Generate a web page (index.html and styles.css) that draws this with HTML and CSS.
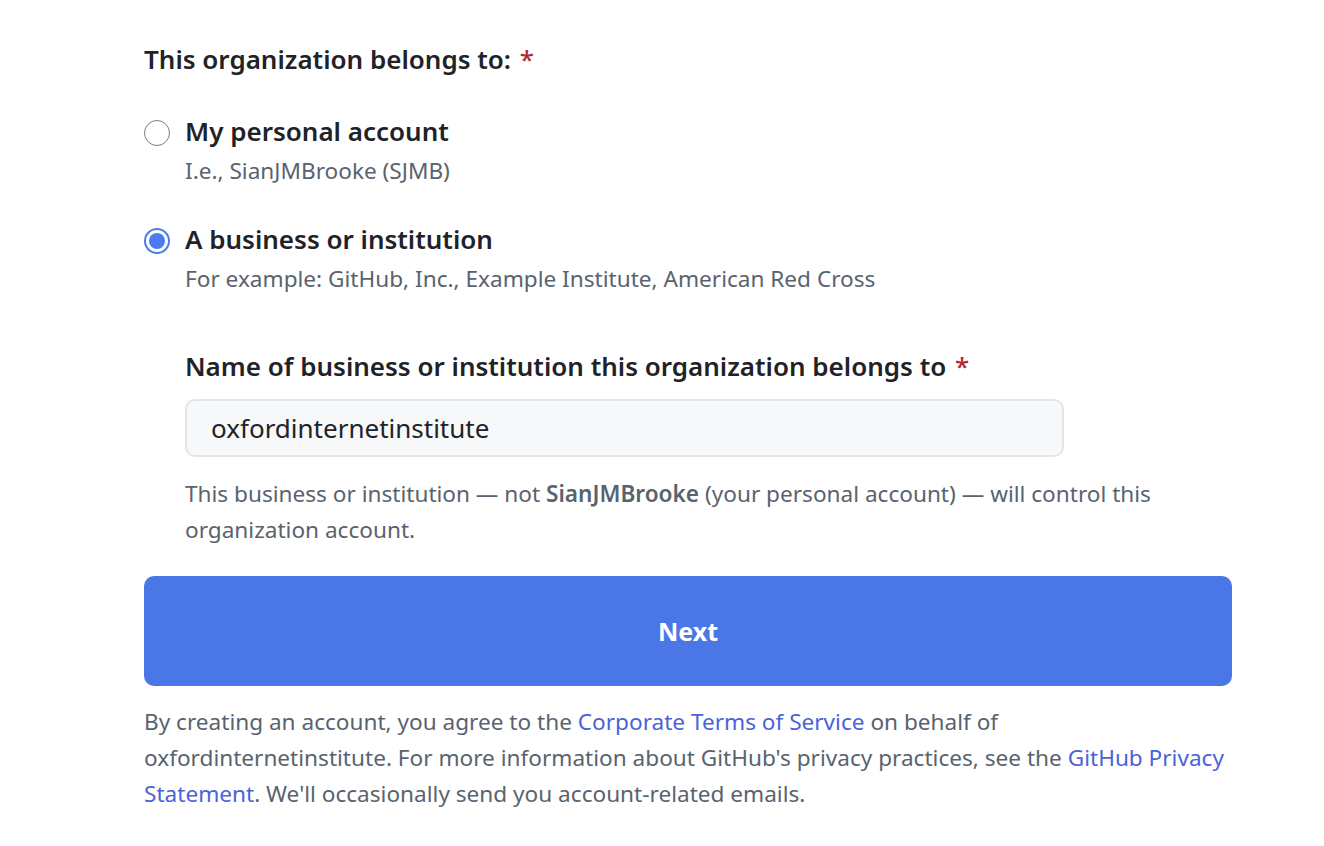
FILE: index.html
```html
<!DOCTYPE html>
<html lang="en">
<head>
<meta charset="utf-8">
<title>Organization setup</title>
<link rel="stylesheet" href="styles.css">
</head>
<body>
<main class="form">
  <h2 class="legend">This organization belongs to: <span class="req">*</span></h2>

  <div class="option">
    <span class="radio"></span>
    <div class="option-body">
      <div class="option-title">My personal account</div>
      <div class="option-note">I.e., SianJMBrooke (SJMB)</div>
    </div>
  </div>

  <div class="option option-second">
    <span class="radio radio-checked"></span>
    <div class="option-body">
      <div class="option-title">A business or institution</div>
      <div class="option-note">For example: GitHub, Inc., Example Institute, American Red Cross</div>
    </div>
  </div>

  <div class="nested">
    <div class="field-label">Name of business or institution this organization belongs to <span class="req">*</span></div>
    <div class="input">oxfordinternetinstitute</div>
    <p class="field-note">This business or institution — not <strong>SianJMBrooke</strong> (your personal account) — will control this organization account.</p>
  </div>

  <button class="next">Next</button>

  <p class="terms">By creating an account, you agree to the <a href="#">Corporate Terms of Service</a> on behalf of oxfordinternetinstitute. For more information about GitHub's privacy practices, see the <a href="#">GitHub Privacy Statement</a>. We'll occasionally send you account-related emails.</p>
</main>
</body>
</html>
```
FILE: styles.css
```css
html, body {
  margin: 0;
  padding: 0;
  background: #ffffff;
}
body {
  font-family: "Noto Sans", "Open Sans", sans-serif;
  color: #1f2328;
}
.form {
  width: 1088px;
  margin-left: 144px;
  padding-top: 41px;
}
.legend {
  margin: 0;
  font-size: 26px;
  line-height: 36px;
  font-weight: 600;
}
.req {
  color: #b4272f;
  font-weight: 500;
  margin-left: 2px;
}
.option {
  display: flex;
  margin-top: 36px;
}
.option-second {
  margin-top: 32px;
}
.radio {
  box-sizing: border-box;
  width: 26px;
  height: 26px;
  border-radius: 50%;
  border: 1px solid #7d7d7d;
  margin-top: 7px;
  margin-right: 15px;
  flex: none;
  display: flex;
  align-items: center;
  justify-content: center;
}
.radio-checked {
  border: 2px solid #4a7bf2;
}
.radio-checked::after {
  content: "";
  width: 16px;
  height: 16px;
  border-radius: 50%;
  background: #4a7bf2;
}
.option-title {
  font-size: 26px;
  line-height: 36px;
  font-weight: 600;
}
.option-note {
  margin-top: 4px;
  font-size: 22.6px;
  line-height: 36px;
  color: #59636e;
}
.nested {
  margin-left: 41px;
  margin-top: 51px;
}
.field-label {
  font-size: 26px;
  line-height: 36px;
  font-weight: 600;
}
.input {
  box-sizing: border-box;
  margin-top: 15px;
  width: 879px;
  height: 58px;
  border: 2px solid #e3e5e8;
  border-radius: 10px;
  background: #f6f8fa;
  padding-left: 24px;
  font-size: 26px;
  line-height: 54px;
  color: #1f2328;
}
.field-note {
  margin: 19px 0 0;
  font-size: 22.6px;
  line-height: 36px;
  color: #59636e;
}
.field-note strong {
  font-weight: 600;
}
.next {
  display: block;
  margin-top: 28px;
  width: 1088px;
  height: 110px;
  border: none;
  border-radius: 10px;
  background: #4a77e5;
  color: #ffffff;
  font-family: inherit;
  font-size: 25px;
  font-weight: 700;
  cursor: pointer;
}
.terms {
  margin: 18px 0 0;
  font-size: 22.6px;
  line-height: 36px;
  color: #59636e;
}
.terms a {
  color: #4a63d8;
  text-decoration: none;
}
```
